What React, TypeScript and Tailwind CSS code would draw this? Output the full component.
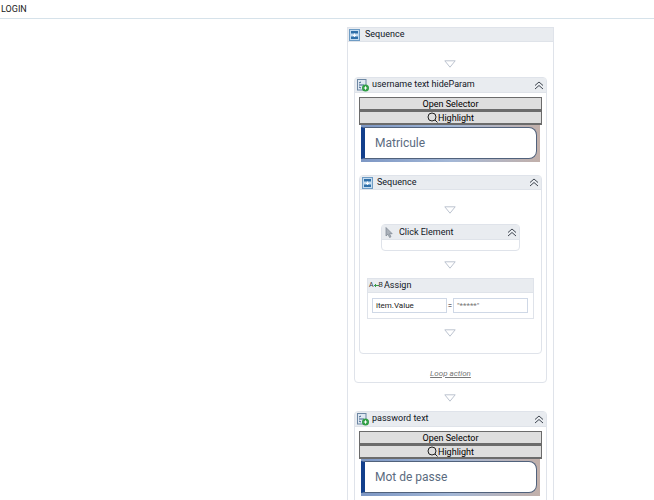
import React, { type ReactNode } from 'react';

const Arrow = () => (
  <svg width="12" height="8" viewBox="0 0 12 8" className="block">
    <path d="M0.8 0.8H11.2L6 7.2Z" fill="#fff" stroke="#bcc3cf" strokeWidth="1" />
  </svg>
);

const Collapse = () => (
  <svg width="10" height="9" viewBox="0 0 10 9" className="block" fill="none" stroke="#3f4650" strokeWidth="1">
    <path d="M1 4.5L5 1L9 4.5" />
    <path d="M1 8L5 4.5L9 8" />
  </svg>
);

const SequenceIcon = () => (
  <svg width="11" height="12" viewBox="0 0 11 12" className="block">
    <rect x="0.5" y="0.5" width="10" height="11" fill="#c4dcf0" stroke="#6f9cc4" />
    <rect x="2" y="2" width="7" height="2.5" fill="#2f6fa8" />
    <rect x="2" y="7.5" width="7" height="2.5" fill="#2f6fa8" />
    <path d="M5.5 4.5V7.5M4 6L5.5 7.5L7 6" stroke="#fff" strokeWidth="1" fill="none" />
  </svg>
);

const TextActivityIcon = () => (
  <svg width="12" height="13" viewBox="0 0 12 13" className="block">
    <rect x="0.5" y="0.5" width="8.5" height="10.5" fill="#dfe8f2" stroke="#6d87a3" />
    <path d="M2 4L4 3M2 6H7M2 8L4 9" stroke="#3a5f88" strokeWidth="1" fill="none" />
    <circle cx="8.5" cy="9" r="3.5" fill="#2f9e44" />
    <path d="M6.8 9H10.2M8.5 7.3V10.7" stroke="#fff" strokeWidth="1" />
  </svg>
);

const CursorIcon = () => (
  <svg width="8" height="11" viewBox="0 0 8 11" className="block">
    <path d="M1 0.5V9L3 7.2L4.6 10.5L6 9.8L4.5 6.7H7.2Z" fill="#aab1ba" stroke="#7d8590" strokeWidth="0.7" />
  </svg>
);

const AssignIcon = () => (
  <span className="flex items-center text-[7px] leading-none text-[#333]">
    A
    <svg width="5" height="5" viewBox="0 0 5 5" fill="none" stroke="#3c9a4a" strokeWidth="1" className="block">
      <path d="M0 2.5H5M2 1L0.5 2.5L2 4" />
    </svg>
    B
  </span>
);

const Header = ({ icon, title, collapse, iconClass, className }: { icon: ReactNode; title: string; collapse?: boolean; iconClass: string; className: string }) => (
  <div className={`flex items-center bg-[#e9ecf0] border-b border-[#dfe3e9] ${className}`}>
    <div className={`flex shrink-0 ${iconClass}`}>{icon}</div>
    <span className="grow truncate text-[9px] text-[#10161f]">{title}</span>
    {collapse && <div className="mr-[2px]"><Collapse /></div>}
  </div>
);

const GrayButton = ({ children }: { children: ReactNode }) => (
  <div className="flex items-center justify-center h-[14px] pt-[2px] bg-[#dedede] border border-[#6b6b6b] border-b-2 text-[9px] text-black">
    {children}
  </div>
);

const TargetCard = ({ title, label, children }: { title: string; label: string; children?: ReactNode }) => (
  <div className="border border-[#dfe3ea] rounded-sm bg-white">
    <Header icon={<TextActivityIcon />} title={title} collapse iconClass="w-[17px] pl-[2px]" className="h-[15px]" />
    <div className="px-1 pt-[4px]">
      <GrayButton>Open Selector</GrayButton>
      <GrayButton>
        <svg width="11" height="11" viewBox="0 0 11 11" fill="none" stroke="#222" strokeWidth="1" className="block -mt-[2px]">
          <circle cx="5" cy="5" r="4" />
          <path d="M8 8L10.5 10.5" />
        </svg>
        Highlight
      </GrayButton>
      <div className="mx-[2px] h-[37px] pb-[3px] pt-[2px] pr-[3px] bg-gradient-to-r from-[#7d97c4] via-[#a3b7d6] to-[#c2b0aa]">
        <div className="flex items-center h-full pl-[10px] bg-white border-l-4 border-l-[#123f8c] rounded-r-[8px] border-y border-r border-y-[#51627c] border-r-[#51627c] text-[12px] text-[#5b6b80]">
          {label}
        </div>
      </div>
      {children}
    </div>
  </div>
);

const ArrowRow = ({ className }: { className: string }) => (
  <div className={`flex justify-center pr-[2px] ${className}`}>
    <Arrow />
  </div>
);

export default function App() {
  return (
    <div className="w-[654px] h-[500px] overflow-hidden bg-white font-['Roboto',sans-serif]">
      <div className="h-[19px] border-b border-[#d6e2ea] pl-[1px] text-[9px] leading-[19px] text-[#222]">LOGIN</div>

      <div className="ml-[347px] mt-[8px] w-[207px] border-x border-t border-[#dfe3ea] bg-white">
        <Header icon={<SequenceIcon />} title="Sequence" iconClass="w-[17px] pl-[1px]" className="h-[14px]" />
        <div className="px-[6px] pb-6">
          <ArrowRow className="pt-[18px] pb-[9px]" />

          <TargetCard title="username text hideParam" label="Matricule">
            <div className="mt-[13px] h-[179px] border border-[#dfe3ea] rounded-sm">
              <Header icon={<SequenceIcon />} title="Sequence" collapse iconClass="w-[17px] pl-[2px]" className="h-[14px]" />
              <ArrowRow className="pt-[16px] pb-[10px]" />

              <div className="mx-[21px] border border-[#dfe3ea] rounded-sm">
                <Header icon={<CursorIcon />} title="Click Element" collapse iconClass="w-[17px] pl-[3px]" className="h-[15px] pt-[1px]" />
                <div className="h-[10px]" />
              </div>

              <ArrowRow className="pt-[10px] pb-[9px]" />

              <div className="mx-[7px] border border-[#dfe3ea]">
                <Header icon={<AssignIcon />} title="Assign" iconClass="w-[16px] pl-[1px]" className="h-[14px]" />
                <div className="flex items-center px-1 py-[5px] text-[8px] text-[#222]">
                  <div className="w-[75px] h-[15px] pl-[3px] leading-[13px] border border-[#cfd8e6]">item.Value</div>
                  <span className="w-[6px] text-center">=</span>
                  <div className="w-[75px] h-[15px] pl-[3px] leading-[13px] border border-[#cfd8e6] text-[#777]">"*****"</div>
                </div>
              </div>

              <ArrowRow className="pt-[10px]" />
            </div>
            <div className="pt-[14px] pb-[2px] text-center text-[8px] italic underline text-[#777]">Loop action</div>
          </TargetCard>

          <ArrowRow className="pt-[11px] pb-[9px]" />

          <TargetCard title="password text" label="Mot de passe">
            <div className="h-8" />
          </TargetCard>
        </div>
      </div>
    </div>
  );
}
